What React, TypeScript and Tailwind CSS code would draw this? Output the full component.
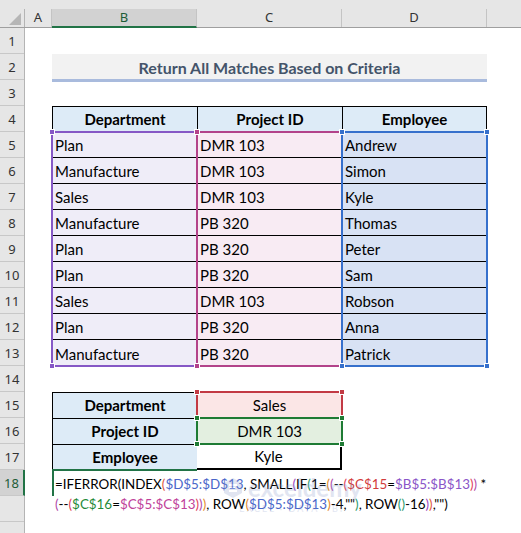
import React from "react";

const cellFont = { fontFamily: "Lato, 'Noto Sans', sans-serif" };

const rowsData = [
  ["Plan", "DMR 103", "Andrew"],
  ["Manufacture", "DMR 103", "Simon"],
  ["Sales", "DMR 103", "Kyle"],
  ["Manufacture", "PB 320", "Thomas"],
  ["Plan", "PB 320", "Peter"],
  ["Plan", "PB 320", "Sam"],
  ["Sales", "DMR 103", "Robson"],
  ["Plan", "PB 320", "Anna"],
  ["Manufacture", "PB 320", "Patrick"],
];

function Handle({ pos, color }: { pos: string; color: string }) {
  return <span className={`absolute h-[6px] w-[6px] border border-white ${pos} ${color}`} />;
}

function RangeColumn({
  items,
  bg,
  border,
  handle,
  className,
}: {
  items: string[];
  bg: string;
  border: string;
  handle: string;
  className: string;
}) {
  return (
    <div className={`relative flex flex-col ${bg} ${className}`}>
      {items.map((t, i) => (
        <div
          key={i}
          className={`flex h-[26px] shrink-0 items-center pl-[3px] pt-[2px] text-[15px] text-black ${
            i < items.length - 1 ? "border-b border-black" : ""
          }`}
        >
          {t}
        </div>
      ))}
      <div className={`pointer-events-none absolute -inset-px border-2 ${border}`} />
      <Handle pos="-left-[3px] -top-[3px]" color={handle} />
      <Handle pos="-right-[3px] -top-[3px]" color={handle} />
      <Handle pos="-left-[3px] -bottom-[3px]" color={handle} />
      <Handle pos="-right-[3px] -bottom-[3px]" color={handle} />
    </div>
  );
}

const K = "text-black";
const D2 = "text-[#e0573c]";
const D3 = "text-[#9b45c2]";
const D4 = "text-[#2a9a6e]";
const D5 = "text-[#e38a2a]";
const D6 = "text-[#b04aa8]";
const D7 = "text-[#e0405a]";
const REF_D = "text-[#4a66c9]";
const REF_B = "text-[#8a55c8]";
const REF_C = "text-[#c0429a]";
const REF_C15 = "text-[#d23c3c]";
const REF_C16 = "text-[#1f8a3a]";

const line1: [string, string][] = [
  ["=IFERROR", K], ["(", K], ["INDEX", K], ["(", D2], ["$D$5:$D$13", REF_D], [", SMALL", K],
  ["(", D3], ["IF", K], ["(", D4], ["1=", K], ["(", D5], ["(", D6], ["--", K], ["(", D7],
  ["$C$15", REF_C15], ["=", K], ["$B$5:$B$13", REF_B], [")", D7], [")", D6], [" *", K],
];
const line2: [string, string][] = [
  ["(", D6], ["--", K], ["(", D7], ["$C$16", REF_C16], ["=", K], ["$C$5:$C$13", REF_C], [")", D7],
  [")", D6], [")", D5], [", ROW", K], ["(", D5], ["$D$5:$D$13", REF_D], [")", D5], ["-4,\"\"", K],
  [")", D4], [", ROW", K], ["(", D4], [")", D4], ["-16", K], [")", D3], [")", D2], [",\"\")", K],
];

export default function App() {
  const rowNums = Array.from({ length: 20 }, (_, i) => i + 1);
  return (
    <div
      className="relative flex h-[533px] w-[521px] flex-col overflow-hidden bg-white"
      style={cellFont}
    >
      <div className="h-[9px] shrink-0 bg-[#e6e6e6]" />
      {/* column headers */}
      <div
        className="flex h-[19px] shrink-0 border-b border-[#9f9f9f] bg-[#e6e6e6] text-[13px] text-[#333]"
        style={{ fontFamily: "'Noto Sans', sans-serif" }}
      >
        <div className="relative w-[25px] shrink-0 border-r border-[#b4b4b4]">
          <svg className="absolute bottom-[2px] right-[3px]" width="12" height="12" viewBox="0 0 12 12">
            <polygon points="12,0 12,12 0,12" fill="#b6b6b6" />
          </svg>
        </div>
        <div className="flex w-[27px] shrink-0 items-center justify-center border-r border-[#c4c4c4]">A</div>
        <div className="-mb-px flex w-[145px] shrink-0 items-center justify-center border-r border-b-2 border-r-[#c4c4c4] border-b-[#217346] bg-[#d2d2d2] text-[#1d5c37]">
          B
        </div>
        <div className="flex w-[145px] shrink-0 items-center justify-center border-r border-[#c4c4c4]">C</div>
        <div className="flex w-[145px] shrink-0 items-center justify-center border-r border-[#c4c4c4]">D</div>
        <div className="flex-1" />
      </div>

      <div className="flex flex-1">
        {/* row headers */}
        <div
          className="flex w-[25px] shrink-0 flex-col border-r border-[#b4b4b4] bg-[#e6e6e6] text-[13px] text-[#333]"
          style={{ fontFamily: "'Noto Sans', sans-serif" }}
        >
          {rowNums.map((n) => (
            <div
              key={n}
              className={
                n === 18
                  ? "-mr-px flex h-[26px] shrink-0 items-center justify-center border-r-2 border-b border-r-[#217346] border-b-[#c8c8c8] bg-[#d2d2d2] pt-[3px] text-[#1d5c37]"
                  : "flex h-[26px] shrink-0 items-center justify-center border-b border-[#c8c8c8] pt-[3px]"
              }
            >
              {n <= 18 ? n : ""}
            </div>
          ))}
        </div>

        {/* sheet content */}
        <div className="grid flex-1 grid-cols-[27px_145px_145px_145px_34px] grid-rows-[repeat(20,26px)]">
          <div className="col-span-3 col-start-2 row-start-2 flex h-[28px] items-center justify-center self-start border-b-[3px] border-[#a9bbdd] bg-[#f2f2f2] pt-[2px] text-[16px] font-bold text-[#44546a]">
            Return All Matches Based on Criteria
          </div>

          <div className="col-span-3 col-start-2 row-start-4 flex border-t border-black bg-[#ddebf7] text-[15px] font-bold text-black">
            <div className="flex w-[145px] items-center justify-center border-l border-black">Department</div>
            <div className="flex w-[145px] items-center justify-center border-l border-black">Project ID</div>
            <div className="flex w-[145px] items-center justify-center border-x border-black">Employee</div>
          </div>

          <RangeColumn
            className="col-start-2 row-span-9 row-start-5"
            items={rowsData.map((r) => r[0])}
            bg="bg-[#efedf8]"
            border="border-[#8658c6]"
            handle="bg-[#8658c6]"
          />
          <RangeColumn
            className="col-start-3 row-span-9 row-start-5"
            items={rowsData.map((r) => r[1])}
            bg="bg-[#f8ebf3]"
            border="border-[#b3438a]"
            handle="bg-[#b3438a]"
          />
          <RangeColumn
            className="col-start-4 row-span-9 row-start-5"
            items={rowsData.map((r) => r[2])}
            bg="bg-[#d8e2f4]"
            border="border-[#3670cc]"
            handle="bg-[#3670cc]"
          />

          <div className="col-start-2 row-span-3 row-start-15 flex flex-col border-l border-t border-black bg-[#ddebf7] text-[15px] font-bold text-black">
            <div className="flex h-[26px] items-center justify-center border-b border-black">Department</div>
            <div className="flex h-[26px] items-center justify-center border-b border-black">Project ID</div>
            <div className="flex h-[25px] items-center justify-center">Employee</div>
          </div>

          <div className="relative col-start-3 row-start-15 flex items-center justify-center bg-[#fbe6e6] text-[15px] text-black">
            Sales
            <div className="pointer-events-none absolute -inset-px border-2 border-[#c23a44]" />
            <Handle pos="-left-[3px] -top-[3px]" color="bg-[#c23a44]" />
            <Handle pos="-right-[3px] -top-[3px]" color="bg-[#c23a44]" />
          </div>
          <div className="relative col-start-3 row-start-16 flex items-center justify-center bg-[#e3efe0] text-[15px] text-black">
            DMR 103
            <div className="pointer-events-none absolute -inset-px border-2 border-[#1e7b34]" />
            <Handle pos="-left-[3px] -top-[3px]" color="bg-[#1e7b34]" />
            <Handle pos="-right-[3px] -top-[3px]" color="bg-[#1e7b34]" />
            <Handle pos="-left-[3px] -bottom-[3px]" color="bg-[#1e7b34]" />
            <Handle pos="-right-[3px] -bottom-[3px]" color="bg-[#1e7b34]" />
          </div>
          <div className="col-start-3 row-start-17 flex items-center justify-center border-r-2 border-b-2 border-black bg-white text-[15px] text-black">
            Kyle
          </div>

          <div className="col-start-2 row-start-18 -mt-px border-l-2 border-t-2 border-[#217346]" />

          <div className="col-span-4 col-start-2 row-span-2 row-start-18 pl-[3px] pt-[4px] text-[13.4px] leading-[20px] whitespace-nowrap">
            <div>
              {line1.map(([t, c], i) => (
                <span key={i} className={c}>{t}</span>
              ))}
            </div>
            <div>
              {line2.map(([t, c], i) => (
                <span key={i} className={c}>{t}</span>
              ))}
            </div>
          </div>
        </div>
      </div>

      {/* watermark */}
      <div className="pointer-events-none absolute left-[222px] top-[470px] flex flex-col items-center opacity-25">
        <div className="flex items-center gap-[4px]">
          <svg width="22" height="22" viewBox="0 0 22 22">
            <path d="M11 1 L20 6 L20 16 L11 21 L2 16 L2 6 Z" fill="#8b9bc9" />
            <path d="M7 8 L15 8 M7 11 L13 11 M7 14 L15 14" stroke="#fff" strokeWidth="2" />
          </svg>
          <span className="text-[24px] font-bold text-[#8b9bc9]">exceldemy</span>
        </div>
        <span className="-mt-[4px] text-[9px] tracking-[2px] text-[#8b9bc9]">EXCEL · DATA · BI</span>
      </div>
    </div>
  );
}
